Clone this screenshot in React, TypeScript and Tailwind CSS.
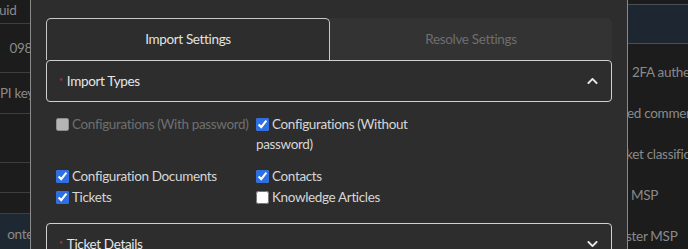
import React from "react";
import { FaChevronDown, FaChevronUp } from "react-icons/fa";

const font = { fontFamily: "Lato, 'Noto Sans', sans-serif" };

const leftRows = [
  { h: "h-[24px]", text: "uid", cls: "justify-start -ml-[1px] items-start" },
  { h: "h-[49px]", text: "098", cls: "justify-end -mr-[2px] items-center" },
  { h: "h-[41px]", text: "PI key", cls: "justify-end -mr-[4px] items-center" },
  { h: "h-[49px]", text: "", cls: "" },
  { h: "h-[30px]", text: "", cls: "" },
  { h: "h-[21px]", text: "", cls: "" },
];

const rightRows = [
  { text: "2FA authentication", ml: "ml-[4px]" },
  { text: "ed comments", ml: "-ml-[1px]" },
  { text: "ket classifications", ml: "-ml-[2px]" },
  { text: "MSP", ml: "ml-[3px]" },
  { text: "ster MSP", ml: "-ml-[2px]" },
];

function CheckItem({
  label,
  checked,
  disabled,
}: {
  label: string;
  checked?: boolean;
  disabled?: boolean;
}) {
  return (
    <label
      className={
        disabled
          ? "block text-[13.5px] leading-[20px] tracking-[-0.35px] text-[#6f6f6f]"
          : "block text-[13.5px] leading-[20px] tracking-[-0.35px] text-[#d6d6d6]"
      }
    >
      <input
        type="checkbox"
        defaultChecked={checked}
        disabled={disabled}
        className="mr-[3px] ml-0 h-[13px] w-[13px] align-[-2px] accent-[#2f6fe4]"
      />
      {label}
    </label>
  );
}

export default function App() {
  return (
    <div
      className="flex h-[249px] w-[688px] overflow-hidden bg-[#1c1c1c]"
      style={font}
    >
      {/* table behind, left side */}
      <div className="flex w-[30px] shrink-0 flex-col overflow-hidden text-[13.5px] tracking-[-0.3px] text-[#8a8a8a]">
        {leftRows.map((r, i) => (
          <div
            key={i}
            className={`flex ${r.h} ${r.cls} shrink-0 whitespace-nowrap border-b border-[#3e3e3e]`}
          >
            {r.text}
          </div>
        ))}
        <div className="flex flex-1 items-center justify-end -mr-[3px] bg-[#1e2833] pt-[6px] whitespace-nowrap">
          onte
        </div>
      </div>

      {/* modal */}
      <div className="w-[598px] shrink-0 border-x border-[#8a8a8a] bg-[#2d2d2d] px-[15px] pt-[18px]">
        {/* tabs */}
        <div className="flex h-[42px] text-[13.5px] tracking-[-0.35px]">
          <div className="flex w-[284px] items-center justify-center rounded-t-[5px] border-x border-t border-[#c8c8c8] text-[#e2e2e2]">
            Import Settings
          </div>
          <div className="flex flex-1 items-center justify-center rounded-tr-[5px] bg-[#333333] text-[#6e6e6e]">
            Resolve Settings
          </div>
        </div>

        {/* Import Types */}
        <div className="flex h-[42px] items-center rounded-[4px] border border-[#d0d0d0] pl-[12px] pr-[12px]">
          <span className="mr-[4px] text-[9px] leading-none text-[#d43a3a]">*</span>
          <span className="flex-1 text-[13.5px] tracking-[-0.35px] text-[#e6e6e6]">Import Types</span>
          <FaChevronUp className="h-[12px] w-[13px] text-[#e6e6e6]" />
        </div>

        <div className="grid grid-cols-[200px_200px] gap-y-[12px] pl-[10px] pt-[12px] pb-[16px]">
          <CheckItem label="Configurations (With password)" disabled />
          <CheckItem label="Configurations (Without password)" checked />
          <div className="flex flex-col gap-[1px]">
            <CheckItem label="Configuration Documents" checked />
            <CheckItem label="Tickets" checked />
          </div>
          <div className="flex flex-col gap-[1px]">
            <CheckItem label="Contacts" checked />
            <CheckItem label="Knowledge Articles" />
          </div>
        </div>

        {/* Ticket Details */}
        <div className="flex h-[42px] items-center rounded-[4px] border border-[#d0d0d0] pl-[12px] pr-[12px]">
          <span className="mr-[4px] text-[9px] leading-none text-[#d43a3a]">*</span>
          <span className="flex-1 text-[13.5px] tracking-[-0.35px] text-[#e6e6e6]">Ticket Details</span>
          <FaChevronDown className="h-[12px] w-[13px] text-[#e6e6e6]" />
        </div>
      </div>

      {/* table behind, right side */}
      <div className="flex min-w-0 flex-1 flex-col overflow-hidden text-[13.5px] tracking-[-0.3px] text-[#8a8a8a]">
        <div className="h-[5px] shrink-0 border-b border-[#4a4f55]" />
        <div className="h-[39px] shrink-0 border-b border-[#4a4f55] bg-[#1e2731]" />
        <div className="flex flex-col pt-[18px]">
          {rightRows.map((r, i) => (
            <div key={i} className={`h-[41px] whitespace-nowrap ${r.ml}`}>
              {r.text}
            </div>
          ))}
        </div>
      </div>
    </div>
  );
}
